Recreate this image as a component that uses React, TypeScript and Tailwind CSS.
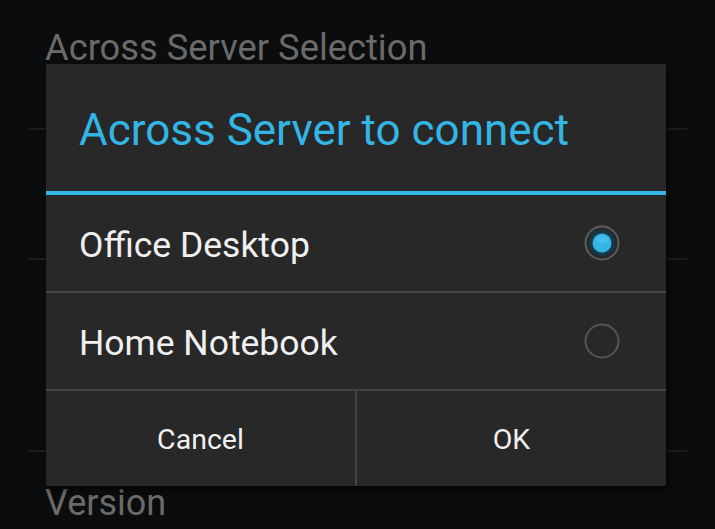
import React from 'react';

const font = { fontFamily: 'Roboto, "Noto Sans", sans-serif' };

function Radio({ checked }: { checked: boolean }) {
  return (
    <svg width="36" height="36" viewBox="0 0 36 36">
      {checked ? (
        <>
          <circle cx="18" cy="18" r="16.5" fill="#262a2c" stroke="#5c5c5c" strokeWidth="2" />
          <circle cx="18" cy="18" r="13" fill="#173847" />
          <circle cx="18" cy="18" r="9.5" fill="#33b5e5" />
          <ellipse cx="18" cy="14.5" rx="6" ry="4" fill="#5cc8ee" opacity="0.5" />
        </>
      ) : (
        <circle cx="18" cy="18" r="16.5" fill="none" stroke="#555555" strokeWidth="2" />
      )}
    </svg>
  );
}

export default function App() {
  return (
    <div className="relative w-[715px] h-[529px] overflow-hidden bg-[#0b0c0d]" style={font}>
      {/* settings list behind the dialog */}
      <div className="flex flex-col">
        <div className="h-[128px] pl-[45px] pt-[26px]">
          <p className="text-[36.3px] leading-[44px] text-[#6a6a6a]">Across Server Selection</p>
        </div>
        <div className="mx-[28px] h-[2px] bg-[#1b1c1d]" />
        <div className="h-[128px]" />
        <div className="mx-[28px] h-[2px] bg-[#1b1c1d]" />
        <div className="h-[190px]" />
        <div className="mx-[28px] h-[2px] bg-[#1b1c1d]" />
        <div className="pl-[45px] pt-[29px]">
          <p className="text-[36px] leading-[44px] text-[#6a6a6a]">Version</p>
        </div>
      </div>

      {/* dialog */}
      <div className="absolute left-[46px] top-[64px] w-[620px] flex flex-col bg-[#282828] rounded-[2px] shadow-[2px_3px_6px_rgba(0,0,0,0.6)]">
        <div className="h-[127px] flex items-center pl-[33px] pt-[4px]">
          <h1 className="text-[44px] text-[#33b5e5]">Across Server to connect</h1>
        </div>
        <div className="h-[4px] bg-[#33b5e5]" />
        <div className="h-[96px] flex items-center justify-between pl-[33px] pr-[46px]">
          <span className="text-[35.5px] text-[#f0f0f0] pt-[5px]">Office Desktop</span>
          <Radio checked />
        </div>
        <div className="h-[2px] bg-[#434343]" />
        <div className="h-[96px] flex items-center justify-between pl-[33px] pr-[46px]">
          <span className="text-[35.5px] text-[#f0f0f0] pt-[5px]">Home Notebook</span>
          <Radio checked={false} />
        </div>
        <div className="h-[2px] bg-[#434343]" />
        <div className="h-[95px] flex">
          <button className="flex-1 flex items-center justify-center pt-[4px] text-[28.5px] text-[#f0f0f0]">Cancel</button>
          <div className="w-[2px] bg-[#434343]" />
          <button className="flex-1 flex items-center justify-center pt-[4px] text-[28.5px] text-[#f0f0f0]">OK</button>
        </div>
      </div>
    </div>
  );
}
